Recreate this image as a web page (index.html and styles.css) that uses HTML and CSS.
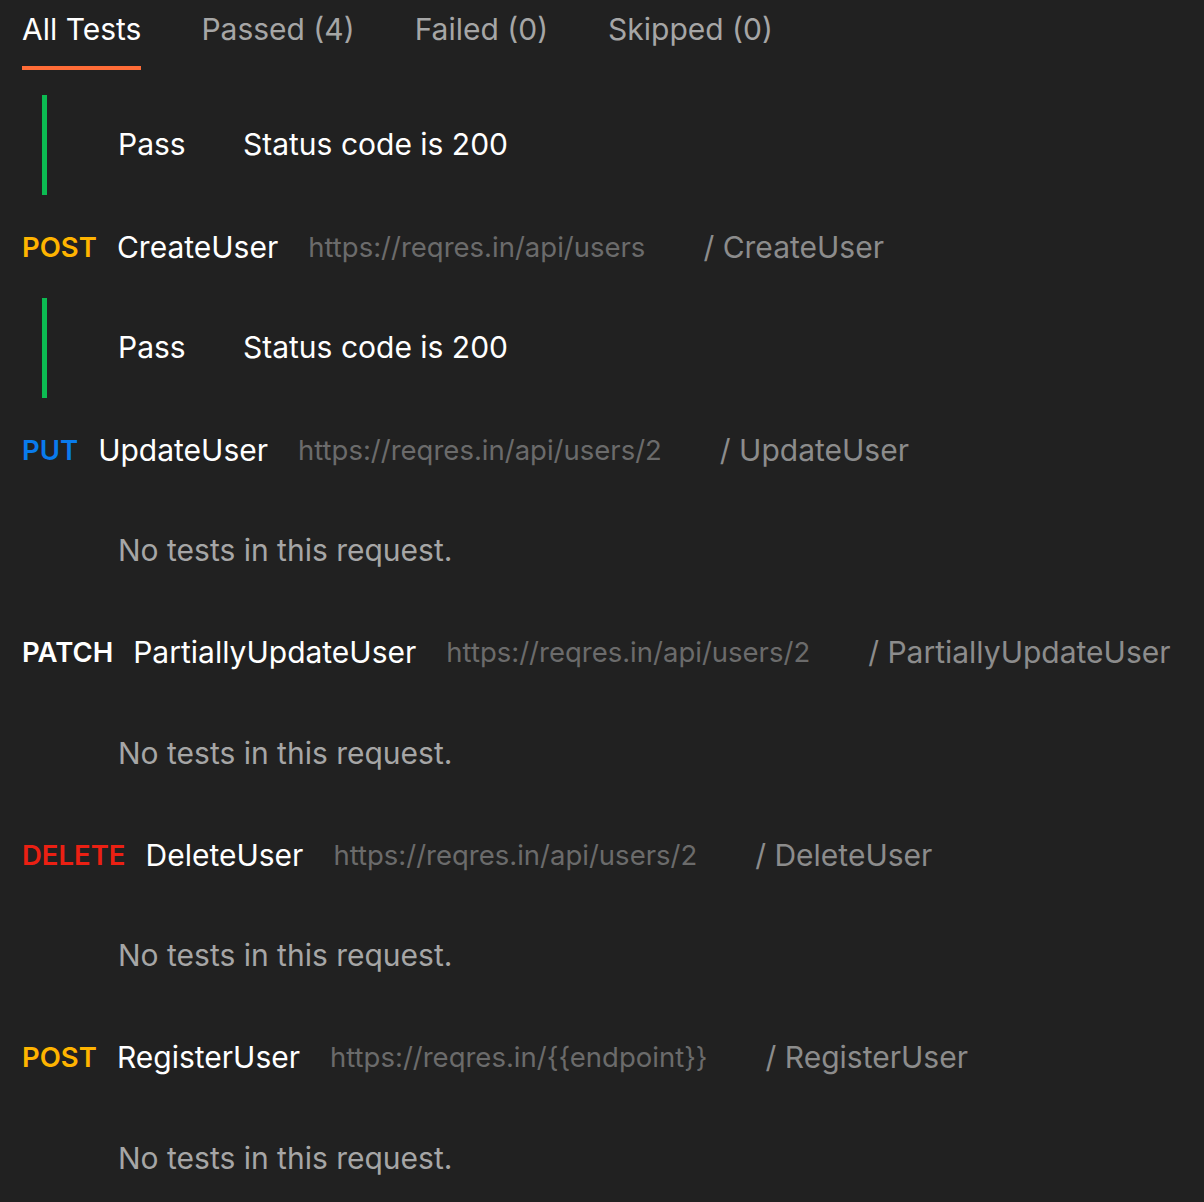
FILE: index.html
```html
<!DOCTYPE html>
<html lang="en">
<head>
<meta charset="utf-8">
<title>Test Results</title>
<link rel="stylesheet" href="styles.css">
</head>
<body>
<div class="page">
  <nav class="tabs">
    <div class="tab active">All Tests</div>
    <div class="tab">Passed (4)</div>
    <div class="tab">Failed (0)</div>
    <div class="tab">Skipped (0)</div>
  </nav>

  <div class="tests">
    <div class="test pass"><span class="status">Pass</span><span class="name">Status code is 200</span></div>
  </div>

  <div class="request">
    <span class="method post">POST</span>
    <span class="req-name">CreateUser</span>
    <span class="url">https://reqres.in/api/users</span>
    <span class="path">/ CreateUser</span>
  </div>
  <div class="tests">
    <div class="test pass"><span class="status">Pass</span><span class="name">Status code is 200</span></div>
  </div>

  <div class="request">
    <span class="method put">PUT</span>
    <span class="req-name">UpdateUser</span>
    <span class="url">https://reqres.in/api/users/2</span>
    <span class="path">/ UpdateUser</span>
  </div>
  <div class="empty">No tests in this request.</div>

  <div class="request">
    <span class="method patch">PATCH</span>
    <span class="req-name">PartiallyUpdateUser</span>
    <span class="url">https://reqres.in/api/users/2</span>
    <span class="path">/ PartiallyUpdateUser</span>
  </div>
  <div class="empty">No tests in this request.</div>

  <div class="request">
    <span class="method delete">DELETE</span>
    <span class="req-name">DeleteUser</span>
    <span class="url">https://reqres.in/api/users/2</span>
    <span class="path">/ DeleteUser</span>
  </div>
  <div class="empty">No tests in this request.</div>

  <div class="request">
    <span class="method post">POST</span>
    <span class="req-name">RegisterUser</span>
    <span class="url">https://reqres.in/{{endpoint}}</span>
    <span class="path">/ RegisterUser</span>
  </div>
  <div class="empty">No tests in this request.</div>
</div>
</body>
</html>
```

FILE: styles.css
```css
html, body {
  margin: 0;
  padding: 0;
  background: #212121;
}
body {
  font-family: Inter, "Noto Sans", sans-serif;
  font-size: 30px;
  color: #ffffff;
}
.page {
  padding: 0 22px;
}
.tabs {
  display: flex;
  gap: 60px;
  height: 70px;
  margin-bottom: 25px;
}
.tab {
  color: #a6a6a6;
  padding-top: 11px;
  box-sizing: border-box;
  height: 70px;
  line-height: 36px;
}
.tab.active {
  color: #ffffff;
  border-bottom: 4px solid #ff6c37;
}
.tests {
  padding-left: 20px;
}
.test {
  display: flex;
  align-items: center;
  box-sizing: border-box;
  height: 100px;
  border-left: 5px solid #0cbb52;
  padding-left: 71px;
  padding-bottom: 2px;
}
.status {
  width: 125px;
}
.request {
  display: flex;
  align-items: center;
  box-sizing: border-box;
  height: 102.5px;
  padding-top: 2px;
  white-space: nowrap;
}
.method {
  font-size: 27.5px;
  font-weight: 600;
  margin-right: 20px;
}
.method.post { color: #ffb400; }
.method.put { color: #097bed; }
.method.patch { color: #ffffff; }
.method.delete { color: #eb2013; }
.req-name {
  margin-right: 30px;
}
.url {
  color: #6b6b6b;
  font-size: 27.5px;
  margin-right: 58px;
}
.path {
  color: #8c8c8c;
}
.empty {
  height: 100px;
  display: flex;
  align-items: center;
  padding-left: 96px;
  color: #a6a6a6;
}
```
